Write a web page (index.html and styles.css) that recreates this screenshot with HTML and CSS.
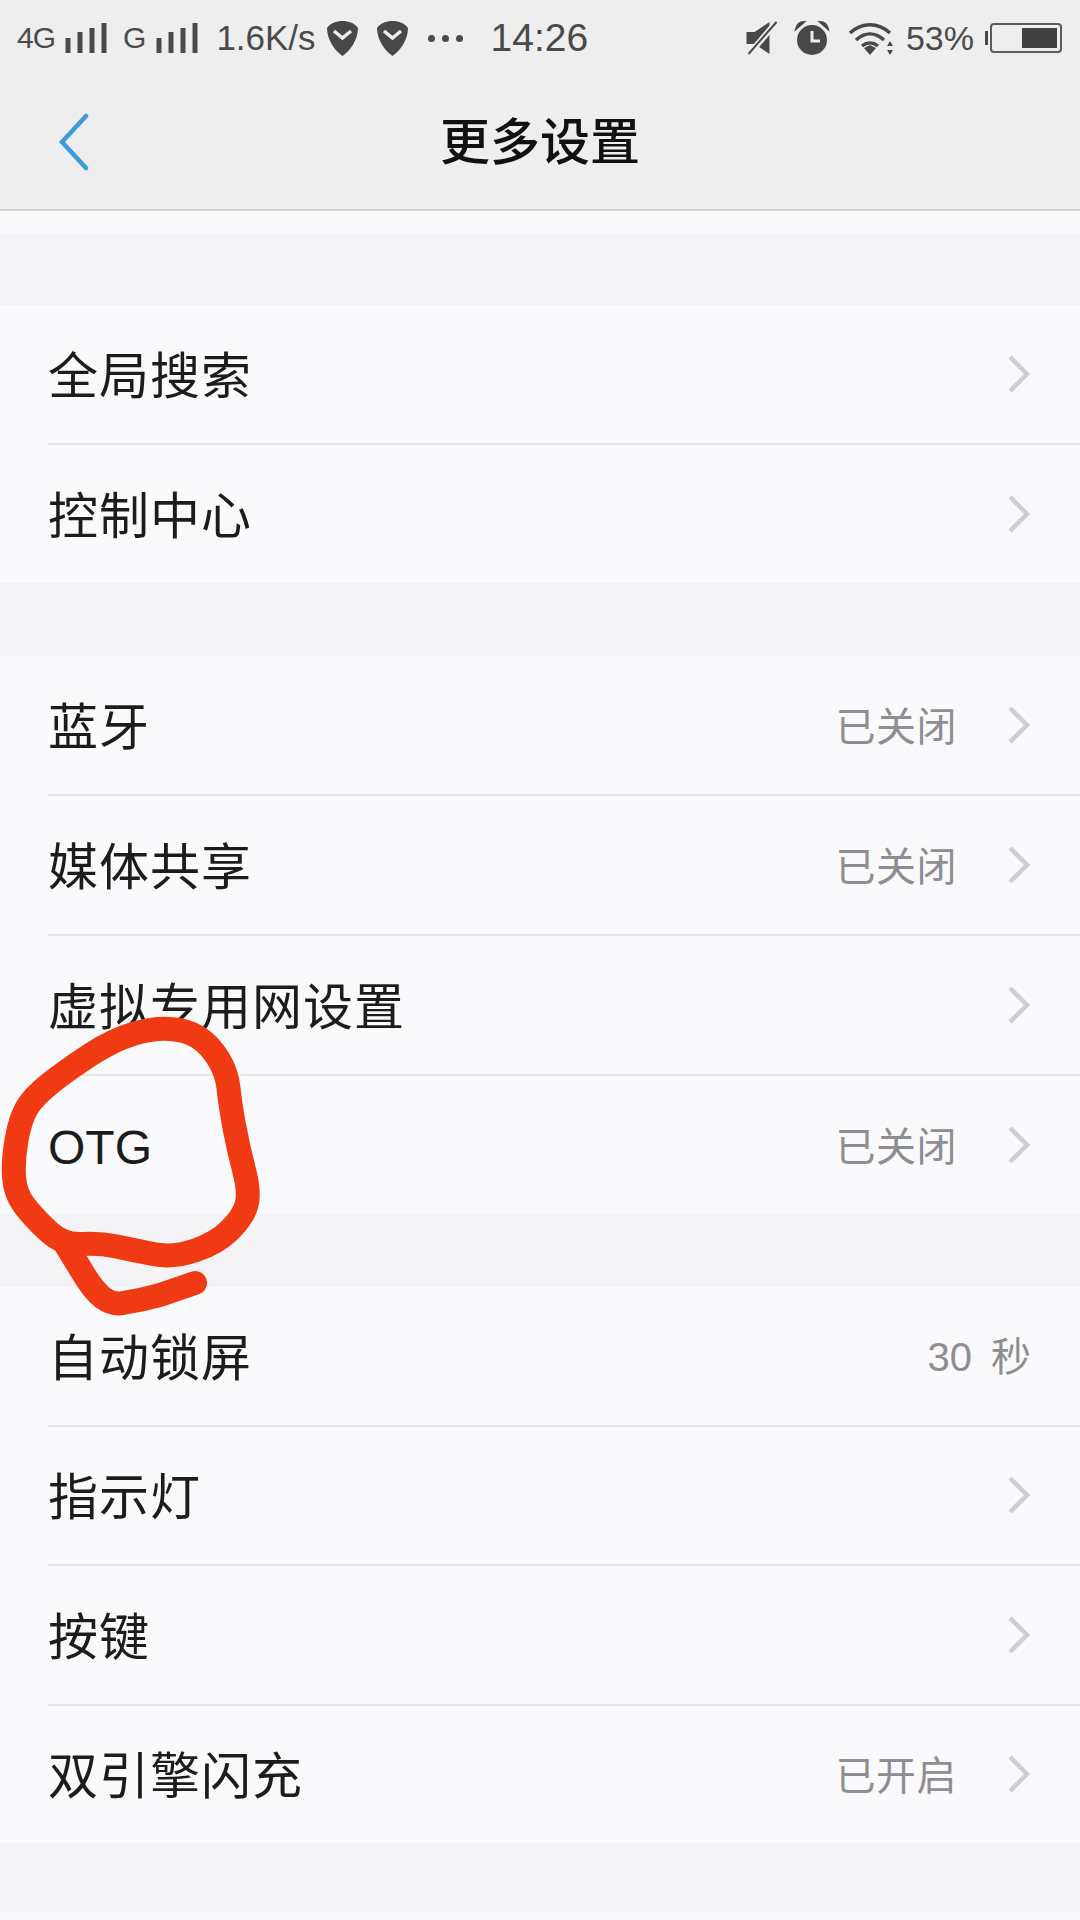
FILE: index.html
```html
<!DOCTYPE html>
<html lang="zh-CN">
<head>
    <meta charset="UTF-8">
    <meta name="viewport" content="width=device-width, initial-scale=1.0">
    <title>更多设置</title>
    <link rel="stylesheet" href="styles.css">
</head>
<body>
    <svg width="0" height="0" class="defs">
        <symbol id="chev" viewBox="0 0 24 40">
            <path d="M3 3 L20 20 L3 37" fill="none" stroke="#cfcfd2" stroke-width="4.5"/>
        </symbol>
        <symbol id="bars" viewBox="0 0 44 30">
            <path d="M4 30V15M16 30V9M28 30V5M40 30V0" stroke="#4a4a4a" stroke-width="5" fill="none"/>
        </symbol>
        <symbol id="shield" viewBox="0 0 31 35">
            <path d="M15.5 0C22 0 28 2.500 31 7C31 18 24 29 15.500 35C7 29 0 18 0 7C3 2.500 9 0 15.500 0Z" fill="#484848"/>
            <path d="M7 10L15.500 17L24 10" fill="none" stroke="#eee" stroke-width="3.500"/>
        </symbol>
    </svg>

    <header class="top">
        <div class="status">
            <div class="status-left">
                <span class="net net-4g">4G</span>
                <svg class="bars"><use href="#bars"/></svg>
                <span class="net net-g">G</span>
                <svg class="bars"><use href="#bars"/></svg>
                <span class="speed">1.6K/s</span>
                <svg class="shield"><use href="#shield"/></svg>
                <svg class="shield shield-2"><use href="#shield"/></svg>
                <span class="dots"><i></i><i></i><i></i></span>
            </div>
            <span class="clock">14:26</span>
            <div class="status-right">
                <svg class="mute" viewBox="0 0 32 34">
                    <path d="M1 11H9L24 1V33L9 23H1Z" fill="#484848"/>
                    <path d="M3 34L31 1" stroke="#eee" stroke-width="6"/>
                    <path d="M3 33L31 1" stroke="#484848" stroke-width="2"/>
                </svg>
                <svg class="alarm" viewBox="0 0 34 34">
                    <circle cx="17" cy="19" r="15" fill="#484848"/>
                    <path d="M1 8C2 3 5 1 9 1ZM33 8C32 3 29 1 25 1Z" fill="#484848" stroke="#484848" stroke-width="2"/>
                    <path d="M17 10V20H25" fill="none" stroke="#eee" stroke-width="3"/>
                </svg>
                <svg class="wifi" viewBox="0 0 46 34">
                    <path d="M2 12C14 1 30 1 42 12M8 19C17 11 27 11 36 19M14 25C19 21 25 21 30 25" fill="none" stroke="#484848" stroke-width="3.500"/>
                    <path d="M16 27L22 24L28 27L22 34Z" fill="#484848"/>
                    <path d="M42 20L45 25H39ZM42 34L45 29H39Z" fill="#484848"/>
                </svg>
                <span class="percent">53%</span>
                <div class="battery-wrap">
                    <span class="battery-cap"></span>
                    <div class="battery"><span class="battery-fill"></span></div>
                </div>
            </div>
        </div>
        <div class="nav">
            <svg class="back" viewBox="0 0 32 58">
                <path d="M28 3L4 29L28 55" fill="none" stroke="#3d9bdc" stroke-width="4.500" stroke-linecap="round"/>
            </svg>
            <h1 class="title">更多设置</h1>
        </div>
    </header>

    <div class="strip"></div>

    <main>
        <section class="group">
            <div class="row"><span class="label">全局搜索</span><svg class="chev"><use href="#chev"/></svg></div>
            <div class="row"><span class="label">控制中心</span><svg class="chev"><use href="#chev"/></svg></div>
        </section>
        <section class="group">
            <div class="row"><span class="label">蓝牙</span><span class="value">已关闭</span><svg class="chev"><use href="#chev"/></svg></div>
            <div class="row"><span class="label">媒体共享</span><span class="value">已关闭</span><svg class="chev"><use href="#chev"/></svg></div>
            <div class="row"><span class="label">虚拟专用网设置</span><svg class="chev"><use href="#chev"/></svg></div>
            <div class="row"><span class="label label-latin">OTG</span><span class="value">已关闭</span><svg class="chev"><use href="#chev"/></svg></div>
        </section>
        <section class="group">
            <div class="row"><span class="label">自动锁屏</span><span class="value value-end">30 秒</span></div>
            <div class="row"><span class="label">指示灯</span><svg class="chev"><use href="#chev"/></svg></div>
            <div class="row"><span class="label">按键</span><svg class="chev"><use href="#chev"/></svg></div>
            <div class="row"><span class="label">双引擎闪充</span><span class="value">已开启</span><svg class="chev"><use href="#chev"/></svg></div>
        </section>
    </main>

    <!-- red pen circle drawn over the OTG row -->
    <svg class="scribble" viewBox="0 0 300 340">
        <path d="M133 54Q153 48 170 49Q187 50 198.500 57.500Q210 65 218.500 79Q227 93 228.500 108Q230 123 234 145Q238 167 244 190Q250 213 246.500 225Q243 237 230 250Q217 263 195 270.500Q173 278 153 274Q133 270 116.500 266.500Q100 263 81.500 264Q63 265 48 251Q33 237 24 225Q15 213 14 196.500Q13 180 16.500 160Q20 140 26.500 128.500Q33 117 50 103.500Q67 90 90 75Q113 60 133 54Z" fill="none" stroke="#f03a14" stroke-width="24" stroke-linejoin="round"/>
        <path d="M66 265Q75 280 83 293Q93 310 103 318Q113 325 123 323Q142 320 160 315L195 303" fill="none" stroke="#f03a14" stroke-width="24" stroke-linecap="round" stroke-linejoin="round"/>
    </svg>

    <div class="tail"></div>
</body>
</html>
```

FILE: styles.css
```css
body {
    margin: 0;
    height: 1920px;
    overflow: hidden;
    position: relative;
    background-color: #f4f4f6;
    font-family: "Liberation Sans", "Noto Sans CJK SC", sans-serif;
}

.defs {
    position: absolute;
}

.top {
    height: 209px;
    background-color: #eeeeef;
    border-bottom: 2px solid #d2d2d4;
}

.status {
    height: 76px;
    display: flex;
    align-items: center;
    position: relative;
    color: #4a4a4a;
}

.status-left {
    display: flex;
    align-items: center;
    padding-left: 17px;
}

.net {
    font-size: 30px;
}

.net-4g {
    letter-spacing: -1px;
}

.net-g {
    margin-left: 15px;
}

.bars {
    width: 44px;
    height: 30px;
    margin-left: 9px;
}

.speed {
    font-size: 35px;
    margin-left: 17px;
}

.shield {
    width: 31px;
    height: 35px;
    margin-left: 11px;
}

.shield-2 {
    margin-left: 19px;
}

.dots {
    display: flex;
    gap: 7px;
    margin-left: 20px;
}

.dots i {
    width: 7px;
    height: 7px;
    border-radius: 50%;
    background-color: #4a4a4a;
}

.clock {
    font-size: 39px;
    margin-left: 28px;
}

.status-right {
    display: flex;
    align-items: center;
    margin-left: auto;
    padding-right: 18px;
}

.mute {
    width: 35px;
    height: 34px;
}

.alarm {
    width: 36px;
    height: 34px;
    margin-left: 15px;
}

.wifi {
    width: 48px;
    height: 34px;
    margin-left: 17px;
}

.percent {
    font-size: 34px;
    margin-left: 11px;
}

.battery-wrap {
    display: flex;
    align-items: center;
    margin-left: 11px;
}

.battery-cap {
    width: 3px;
    height: 14px;
    background-color: #4a4a4a;
    margin-right: 2px;
}

.battery {
    box-sizing: border-box;
    width: 72px;
    height: 30px;
    border: 2px solid #5c5c5c;
    border-radius: 4px;
    padding: 3px;
    display: flex;
    justify-content: flex-end;
}

.battery-fill {
    width: 35px;
    background-color: #404040;
}

.nav {
    height: 133px;
    box-sizing: border-box;
    padding-bottom: 10px;
    display: flex;
    align-items: center;
    justify-content: center;
    position: relative;
}

.back {
    position: absolute;
    left: 58px;
    top: 37px;
    width: 32px;
    height: 58px;
}

.title {
    margin: 0;
    font-size: 50px;
    font-weight: 500;
    color: #111;
}

.strip {
    height: 22px;
    background-color: #f9f9fb;
}

main {
    padding-top: 72px;
}

.group {
    background-color: #fafafc;
    margin-bottom: 73px;
}

.row {
    height: 138px;
    display: flex;
    align-items: center;
    margin-left: 48px;
    padding-right: 49px;
    border-bottom: 2px solid #e6e6e9;
}

.group:last-child .row {
    height: 137.5px;
}

.group .row:last-child {
    border-bottom: none;
}

.label {
    font-size: 50px;
    letter-spacing: 1px;
    color: #1c1c1c;
    margin-right: auto;
    padding-bottom: 4px;
}

.label-latin {
    font-size: 48px;
    letter-spacing: 0;
    padding-top: 4px;
    padding-bottom: 0;
}

.value {
    font-size: 40px;
    letter-spacing: 0.5px;
    color: #8e8e90;
    margin-right: 50px;
    padding-bottom: 3px;
}

.value-end {
    margin-right: 0;
    letter-spacing: 0;
    word-spacing: 8px;
}

.chev {
    width: 24px;
    height: 40px;
}

.scribble {
    position: absolute;
    left: 0;
    top: 980px;
    width: 300px;
    height: 340px;
}

.tail {
    position: absolute;
    left: 0;
    right: 0;
    bottom: 0;
    height: 8px;
    background-color: #fafafc;
}
```
